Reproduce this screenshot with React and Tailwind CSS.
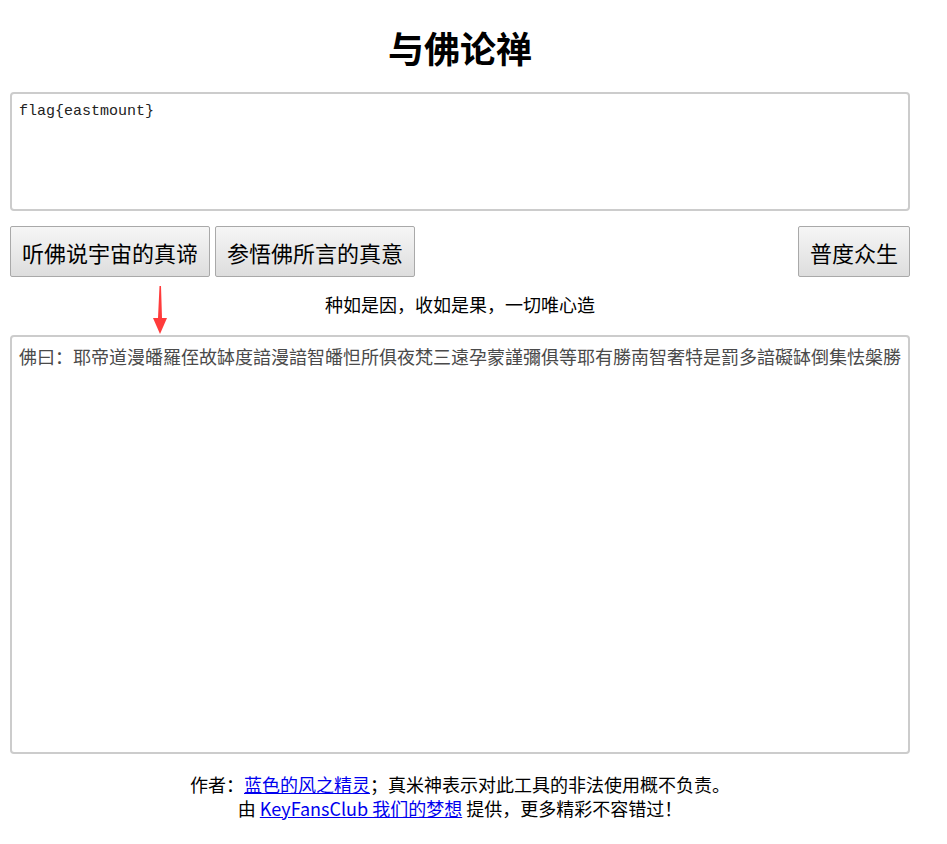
const cnFont = { fontFamily: '"Noto Sans CJK SC", "Noto Sans", sans-serif' };

function DownArrow() {
  return (
    <svg width="20" height="50" viewBox="0 0 20 50" className="block">
      <path d="M9.5 1 L11 1 L12 33 L17 33 L10 49 L3 33 L8 33 Z" fill="#ff3b3b" />
    </svg>
  );
}

function BigButton({ children }) {
  return (
    <button
      type="button"
      className="h-[51px] rounded-[2px] border border-[#a9a9a9] bg-gradient-to-b from-[#f6f6f6] to-[#dddddd] px-[11px] text-[22px] leading-none text-black"
    >
      {children}
    </button>
  );
}

export default function App() {
  return (
    <div className="min-h-[844px] bg-white" style={cnFont}>
      <div className="w-[920px] px-[10px]">
        <h1 className="mt-[20px] mb-[18px] text-center text-[36px] font-bold leading-[54px] text-black">
          与佛论禅
        </h1>

        <div className="h-[119px] rounded-[4px] border-2 border-[#cccccc] px-[7px] py-[8px]">
          <div
            className="text-[15px] leading-[20px] text-[#222]"
            style={{ fontFamily: '"Liberation Mono", "Noto Sans CJK SC", monospace' }}
          >
            flag{"{"}eastmount{"}"}
          </div>
        </div>

        <div className="mt-[15px] flex items-center gap-[5px]">
          <BigButton>听佛说宇宙的真谛</BigButton>
          <BigButton>参悟佛所言的真意</BigButton>
          <div className="flex-1" />
          <BigButton>普度众生</BigButton>
        </div>

        <div className="relative h-[58px] pt-[14px] text-center text-[18px] leading-[26px] text-black">
          种如是因，收如是果，一切唯心造
          <div className="absolute left-[140px] top-[8px]">
            <DownArrow />
          </div>
        </div>

        <div className="h-[419px] overflow-hidden rounded-[4px] border-2 border-[#cccccc] px-[7px] py-[6px]">
          <div className="whitespace-nowrap text-[18px] leading-[26px] text-[#4a4a4a]">
            佛曰：耶帝道漫皤羅侄故缽度諳漫諳智皤怛所俱夜梵三遠孕蒙謹彌俱等耶有勝南智奢特是罰多諳礙缽倒集怯槃勝
          </div>
        </div>

        <div className="mt-[18px] text-center text-[18px] leading-[24px] text-black">
          <div>
            作者：
            <a href="#" className="text-[#0000ee] underline">
              蓝色的风之精灵
            </a>
            ；真米神表示对此工具的非法使用概不负责。
          </div>
          <div>
            由{" "}
            <a href="#" className="text-[#0000ee] underline">
              KeyFansClub 我们的梦想
            </a>{" "}
            提供，更多精彩不容错过！
          </div>
        </div>
      </div>
    </div>
  );
}
